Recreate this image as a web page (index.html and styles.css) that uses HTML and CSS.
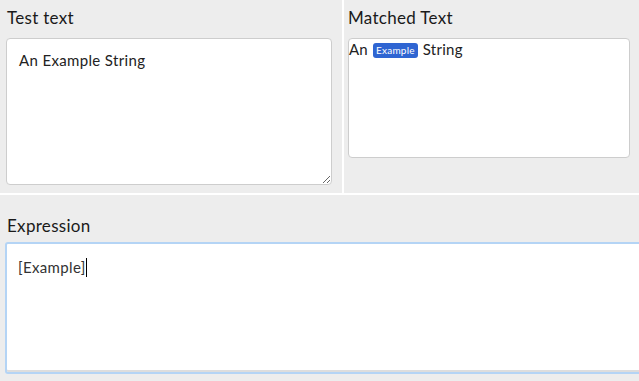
FILE: index.html
```html
<!DOCTYPE html>
<html lang="en">
<head>
  <meta charset="UTF-8">
  <meta name="viewport" content="width=device-width, initial-scale=1.0">
  <title>Regex tester</title>
  <link rel="stylesheet" href="styles.css">
</head>
<body>
  <div class="top-row">
    <div class="panel panel-left">
      <label for="test-text" class="panel-label">Test text</label>
      <textarea id="test-text" class="text-input">An Example String</textarea>
    </div>

    <div class="panel panel-right">
      <div class="panel-label">Matched Text</div>
      <div class="match-box">An <span class="match">Example</span> String</div>
    </div>
  </div>

  <div class="panel panel-bottom">
    <div class="panel-label">Expression</div>
    <div class="expr-input">[Example]<span class="caret"></span></div>
  </div>
</body>
</html>
```

FILE: styles.css
```css
:root {
  --panel-bg: #ededed;
  --border-color: #cdcdcd;
  --text-color: #222;
  --focus-color: #b4d4f5;
  --match-color: #2f65d2;
}

* {
  box-sizing: border-box;
  margin: 0;
  padding: 0;
}

body {
  font-family: Lato, 'Open Sans', sans-serif;
  color: var(--text-color);
  background-color: #fff;
  height: 100vh;
  overflow: hidden;
  display: flex;
  flex-direction: column;
  gap: 2px;
}

.top-row {
  display: grid;
  grid-template-columns: 342px 1fr;
  gap: 2px;
  height: 193px;
}

.panel {
  background-color: var(--panel-bg);
}

.panel-label {
  display: block;
  font-size: 17px;
  line-height: 20px;
  letter-spacing: 0.3px;
  color: #1a1a1a;
  margin-bottom: 10px;
}

.panel-left {
  padding: 8px 10px 0 6px;
}

.panel-left .panel-label {
  padding-left: 1px;
}

.text-input {
  display: block;
  width: 326px;
  height: 147px;
  border: 1px solid var(--border-color);
  border-radius: 4px;
  background: #fff;
  padding: 11px 12px;
  font-family: inherit;
  font-size: 15px;
  line-height: 20px;
  letter-spacing: 0.35px;
  color: var(--text-color);
  resize: vertical;
  outline: none;
}

.panel-right {
  padding: 8px 9px 0 4px;
}

.match-box {
  height: 120px;
  border: 1px solid var(--border-color);
  border-radius: 4px;
  background: #fff;
  font-size: 15px;
  line-height: 20px;
  letter-spacing: 0.25px;
}

.match {
  display: inline-block;
  background-color: var(--match-color);
  color: #fff;
  font-size: 10px;
  line-height: 13px;
  letter-spacing: 0.2px;
  padding: 1px 3px;
  margin: 0 1px;
  border-radius: 3px;
  vertical-align: 1px;
}

.panel-bottom {
  flex: 1;
  overflow: hidden;
  padding: 21px 0 0 5px;
}

.panel-bottom .panel-label {
  padding-left: 2px;
  margin-bottom: 6px;
}

.expr-input {
  width: calc(100% + 20px);
  height: 132px;
  background: #fff;
  border: 2px solid var(--focus-color);
  border-radius: 3px;
  box-shadow: inset 0 -2px 0 #ddd;
  padding: 12px 11px;
  font-size: 15px;
  line-height: 22px;
  letter-spacing: 0.35px;
  color: #333;
}

.caret {
  display: inline-block;
  width: 1px;
  height: 19px;
  background: #000;
  vertical-align: -4px;
}
```
